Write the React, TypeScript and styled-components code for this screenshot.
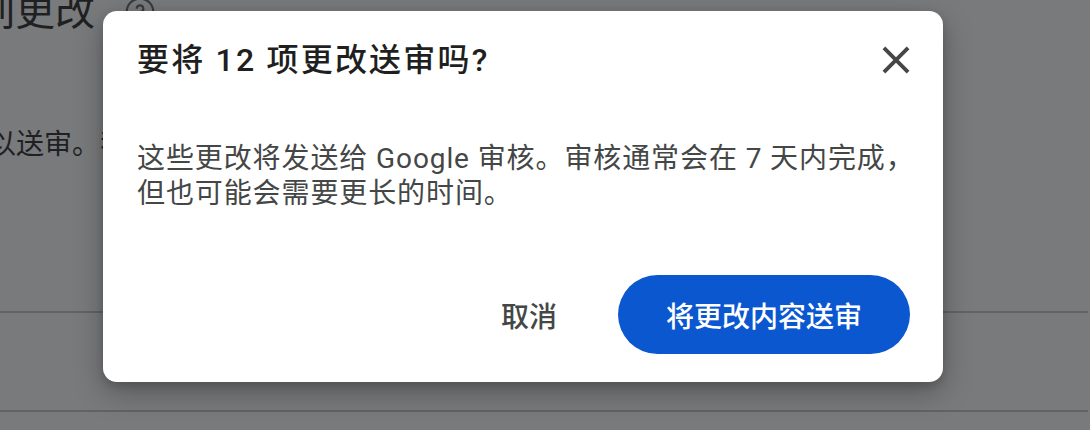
import React from 'react';
import styled, { createGlobalStyle } from 'styled-components';

const GlobalStyle = createGlobalStyle`
    html, body {
        margin: 0;
        padding: 0;
        background: #fff;
        overflow: hidden;
    }
    body {
        font-family: Roboto, "Noto Sans CJK SC", sans-serif;
    }
`;

const Page = styled.div`
    position: relative;
    width: 1090px;
    height: 430px;
    overflow: hidden;
    background: #fff;
`;

const PageContent = styled.div`
    display: flex;
    flex-direction: column;
`;

const PageHeading = styled.h1`
    display: flex;
    align-items: center;
    gap: 29px;
    margin: -12px 0 0 -65px;
    font-size: 40px;
    line-height: 48px;
    font-weight: 400;
    color: #1f1f1f;
`;

const HelpIcon = styled.svg`
    width: 32px;
    height: 32px;
    color: #5f6368;
`;

const PageText = styled.p`
    margin: 91px 0 0 -40px;
    font-size: 28px;
    line-height: 36px;
    color: #1f1f1f;
    white-space: nowrap;
`;

const Divider = styled.div<{ gap: number }>`
    height: 2px;
    margin-top: ${(p) => p.gap}px;
    margin-right: 2px;
    background: #c4c7c5;
`;

const Overlay = styled.div`
    position: absolute;
    inset: 0;
    display: flex;
    align-items: flex-start;
    padding: 11px 0 0 103px;
    background: rgba(32, 33, 36, 0.6);
`;

const Dialog = styled.div`
    display: flex;
    flex-direction: column;
    width: 840px;
    box-sizing: border-box;
    padding: 31px 33px 28px 34px;
    background: #fff;
    border-radius: 14px;
    box-shadow: 0 10px 30px rgba(0, 0, 0, 0.28), 0 4px 10px rgba(0, 0, 0, 0.15);
`;

const Header = styled.div`
    display: flex;
    align-items: center;
    justify-content: space-between;
    height: 36px;
`;

const Title = styled.h2`
    margin: 0;
    font-size: 32px;
    line-height: 36px;
    font-weight: 500;
    letter-spacing: 2.2px;
    color: #1f1f1f;
    white-space: nowrap;
`;

const CloseButton = styled.button`
    display: flex;
    align-items: center;
    justify-content: center;
    width: 48px;
    height: 48px;
    margin-right: -10px;
    padding: 0;
    border: none;
    background: transparent;
    color: #444746;
    cursor: pointer;

    svg {
        width: 46px;
        height: 46px;
    }
`;

const Body = styled.p`
    margin: 63px 0 0;
    font-size: 28px;
    line-height: 35px;
    letter-spacing: 0.9px;
    color: #444746;
    white-space: nowrap;
`;

const Actions = styled.div`
    display: flex;
    justify-content: flex-end;
    align-items: center;
    gap: 35px;
    margin-top: 64px;
`;

const ActionButton = styled.button<{ primary?: boolean }>`
    height: 79px;
    padding: 0 ${(p) => (p.primary ? 48 : 26)}px;
    border: none;
    border-radius: 40px;
    font-family: Roboto, "Noto Sans CJK SC", sans-serif;
    font-size: 28px;
    font-weight: 500;
    background: ${(p) => (p.primary ? '#0b57d0' : 'transparent')};
    color: ${(p) => (p.primary ? '#fff' : '#444746')};
    cursor: pointer;
`;

const App: React.FC = () => {
    return (
        <>
            <GlobalStyle />
            <Page>
                <PageContent>
                    <PageHeading>
                        系列更改
                        <HelpIcon viewBox="0 0 24 24" fill="none" stroke="currentColor" strokeWidth="1.6">
                            <circle cx="12" cy="12" r="10" />
                            <path d="M9.5 9.5a2.5 2.5 0 1 1 3.5 2.3c-.7.3-1 .8-1 1.5v.7" />
                            <circle cx="12" cy="17.2" r="0.6" fill="currentColor" />
                        </HelpIcon>
                    </PageHeading>
                    <PageText>可以送审。我们会尽快完成审核。</PageText>
                    <Divider gap={148} />
                    <Divider gap={97} />
                </PageContent>
                <Overlay>
                    <Dialog role="dialog">
                        <Header>
                            <Title>要将 12 项更改送审吗?</Title>
                            <CloseButton aria-label="关闭">
                                <svg viewBox="0 0 24 24" fill="currentColor">
                                    <path d="M19 6.41L17.59 5 12 10.59 6.41 5 5 6.41 10.59 12 5 17.59 6.41 19 12 13.41 17.59 19 19 17.59 13.41 12z" />
                                </svg>
                            </CloseButton>
                        </Header>
                        <Body>
                            这些更改将发送给 Google 审核。审核通常会在 7 天内完成，
                            <br />
                            但也可能会需要更长的时间。
                        </Body>
                        <Actions>
                            <ActionButton>取消</ActionButton>
                            <ActionButton primary>将更改内容送审</ActionButton>
                        </Actions>
                    </Dialog>
                </Overlay>
            </Page>
        </>
    );
};

export default App;
